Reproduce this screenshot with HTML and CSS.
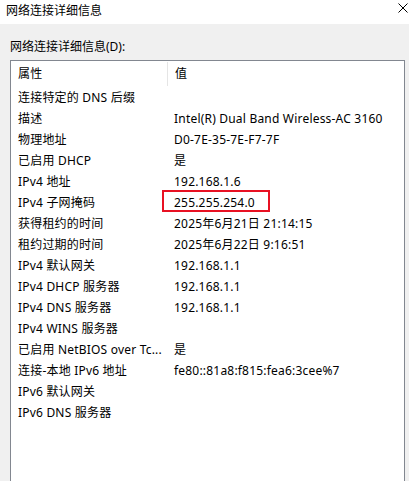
FILE: index.html
```html
<!DOCTYPE html>
<html lang="zh-CN">
<head>
  <meta charset="UTF-8" />
  <title>网络连接详细信息</title>
  <link rel="stylesheet" href="styles.css">
</head>
<body>

<div class="titlebar">
  <span class="title">网络连接详细信息</span>
  <span class="close">
    <svg width="10" height="10" viewBox="0 0 10 10"><path d="M0.5 0.5 L9.5 9.5 M9.5 0.5 L0.5 9.5" stroke="#000" stroke-width="1" fill="none"/></svg>
  </span>
</div>

<div class="content">
  <div class="label">网络连接详细信息(D):</div>

  <div class="list">
    <div class="row head">
      <div class="cell name">属性</div>
      <div class="cell value">值</div>
    </div>
    <div class="row"><div class="cell name">连接特定的 DNS 后缀</div><div class="cell value"></div></div>
    <div class="row"><div class="cell name">描述</div><div class="cell value">Intel(R) Dual Band Wireless-AC 3160</div></div>
    <div class="row"><div class="cell name">物理地址</div><div class="cell value">D0-7E-35-7E-F7-7F</div></div>
    <div class="row"><div class="cell name">已启用 DHCP</div><div class="cell value">是</div></div>
    <div class="row"><div class="cell name">IPv4 地址</div><div class="cell value">192.168.1.6</div></div>
    <div class="row"><div class="cell name">IPv4 子网掩码</div><div class="cell value">255.255.254.0<span class="mark"></span></div></div>
    <div class="row"><div class="cell name">获得租约的时间</div><div class="cell value">2025年6月21日 21:14:15</div></div>
    <div class="row"><div class="cell name">租约过期的时间</div><div class="cell value">2025年6月22日 9:16:51</div></div>
    <div class="row"><div class="cell name">IPv4 默认网关</div><div class="cell value">192.168.1.1</div></div>
    <div class="row"><div class="cell name">IPv4 DHCP 服务器</div><div class="cell value">192.168.1.1</div></div>
    <div class="row"><div class="cell name">IPv4 DNS 服务器</div><div class="cell value">192.168.1.1</div></div>
    <div class="row"><div class="cell name">IPv4 WINS 服务器</div><div class="cell value"></div></div>
    <div class="row"><div class="cell name">已启用 NetBIOS over Tc...</div><div class="cell value">是</div></div>
    <div class="row"><div class="cell name">连接-本地 IPv6 地址</div><div class="cell value">fe80::81a8:f815:fea6:3cee%7</div></div>
    <div class="row"><div class="cell name">IPv6 默认网关</div><div class="cell value"></div></div>
    <div class="row"><div class="cell name">IPv6 DNS 服务器</div><div class="cell value"></div></div>
  </div>
</div>

</body>
</html>
```

FILE: styles.css
```css
body {
  margin: 0;
  font-family: "Noto Sans", "Noto Sans CJK SC", sans-serif;
  font-size: 12px;
  color: #000000;
  background-color: #f0f0f0;
  overflow: hidden;
}

.titlebar {
  height: 24px;
  background-color: #ffffff;
  display: flex;
  align-items: center;
  justify-content: space-between;
  padding-left: 6px;
  padding-right: 1px;
}

.title {
  font-size: 12px;
  margin-top: -4px;
}

.close {
  display: flex;
  margin-top: -8px;
}

.content {
  padding-left: 10px;
  padding-right: 4px;
}

.label {
  height: 36px;
  line-height: 16px;
  padding-top: 15px;
  box-sizing: border-box;
}

.list {
  border: 1px solid #828790;
  background-color: #ffffff;
  height: 440px;
  padding-top: 1px;
  box-sizing: border-box;
}

.row {
  display: flex;
  height: 21px;
  line-height: 21px;
  white-space: nowrap;
  letter-spacing: 0.2px;
}

.row.head {
  height: 24px;
  line-height: 24px;
  margin-bottom: 1px;
}

.cell {
  padding-left: 7px;
  box-sizing: border-box;
}

.name {
  width: 156px;
  overflow: hidden;
}

.value {
  flex: 1;
  position: relative;
}

.head .value {
  border-left: 1px solid #e5e5e5;
  padding-left: 7px;
}

.mark {
  position: absolute;
  left: -5px;
  top: -2px;
  width: 108px;
  height: 22px;
  border: 2px solid #e81123;
  box-sizing: border-box;
}
```
